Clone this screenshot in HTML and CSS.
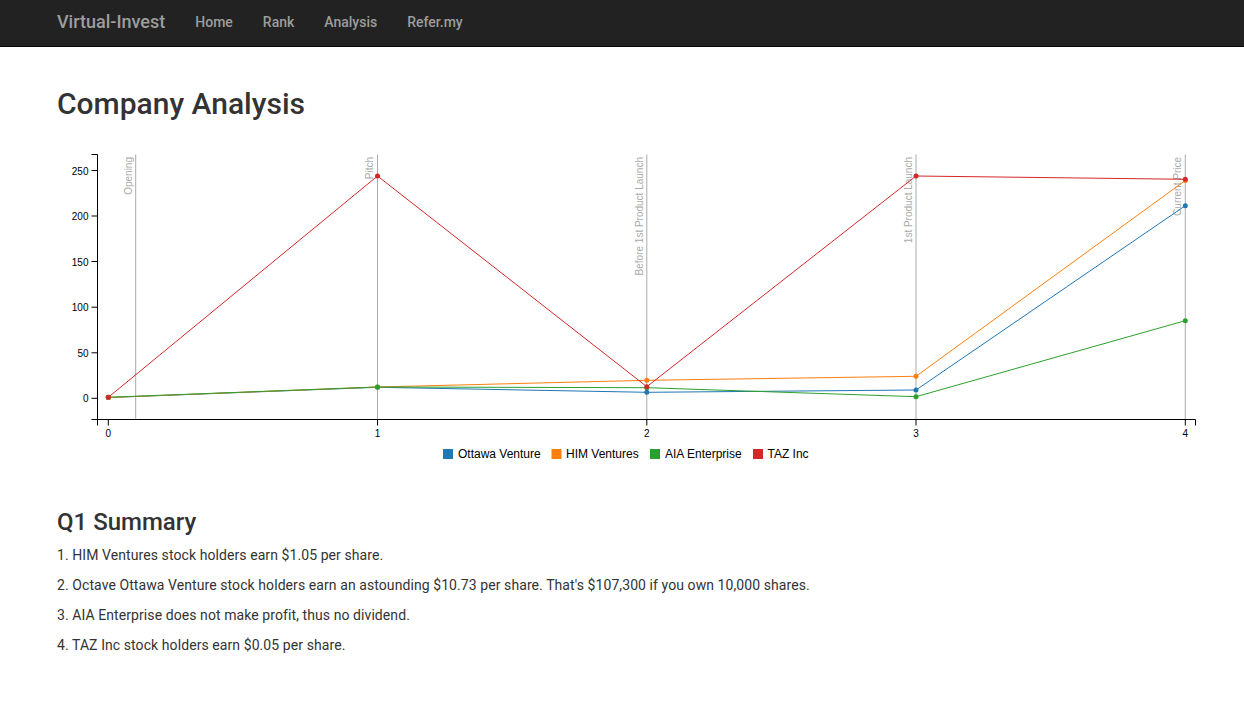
FILE: index.html
```html
<!DOCTYPE html>
<html>
<head>
<meta charset="utf-8">
<title>Company Analysis</title>
<link rel="stylesheet" href="styles.css">
</head>
<body>
<nav class="navbar">
  <div class="nav-inner">
    <a class="brand" href="#">Virtual-Invest</a>
    <a class="nav-link" href="#">Home</a>
    <a class="nav-link" href="#">Rank</a>
    <a class="nav-link" href="#">Analysis</a>
    <a class="nav-link" href="#">Refer.my</a>
  </div>
</nav>
<main class="content">
  <h1 class="title">Company Analysis</h1>
  <svg class="chart" width="1140" height="330" viewBox="57 140 1140 330" xmlns="http://www.w3.org/2000/svg">
    <!-- grid lines -->
    <g class="grid">
      <line x1="135.7" y1="154.5" x2="135.7" y2="419.5"/>
      <line x1="377.5" y1="154.5" x2="377.5" y2="419.5"/>
      <line x1="646.8" y1="154.5" x2="646.8" y2="419.5"/>
      <line x1="916" y1="154.5" x2="916" y2="419.5"/>
      <line x1="1185.3" y1="154.5" x2="1185.3" y2="419.5"/>
    </g>
    <g class="grid-text">
      <text transform="translate(131.5,157) rotate(-90)" text-anchor="end">Opening</text>
      <text transform="translate(373.3,157) rotate(-90)" text-anchor="end">Pitch</text>
      <text transform="translate(642.6,157) rotate(-90)" text-anchor="end">Before 1st Product Launch</text>
      <text transform="translate(911.8,157) rotate(-90)" text-anchor="end">1st Product Launch</text>
      <text transform="translate(1181.1,157) rotate(-90)" text-anchor="end">Current Price</text>
    </g>
    <!-- y axis -->
    <g class="axis">
      <path d="M91.5,154.5 H97.5 V419.5 H91.5"/>
      <line x1="91.5" y1="170.5" x2="97.5" y2="170.5"/>
      <line x1="91.5" y1="216" x2="97.5" y2="216"/>
      <line x1="91.5" y1="261.5" x2="97.5" y2="261.5"/>
      <line x1="91.5" y1="307.2" x2="97.5" y2="307.2"/>
      <line x1="91.5" y1="352.8" x2="97.5" y2="352.8"/>
      <line x1="91.5" y1="398.3" x2="97.5" y2="398.3"/>
    </g>
    <g class="tick-text" text-anchor="end">
      <text x="88.5" y="174.5">250</text>
      <text x="88.5" y="220">200</text>
      <text x="88.5" y="265.5">150</text>
      <text x="88.5" y="311.2">100</text>
      <text x="88.5" y="356.8">50</text>
      <text x="88.5" y="402.3">0</text>
    </g>
    <!-- x axis -->
    <g class="axis">
      <path d="M97.5,425.5 V419.5 H1195.5 V425.5"/>
      <line x1="108.3" y1="419.5" x2="108.3" y2="425.5"/>
      <line x1="377.5" y1="419.5" x2="377.5" y2="425.5"/>
      <line x1="646.8" y1="419.5" x2="646.8" y2="425.5"/>
      <line x1="916" y1="419.5" x2="916" y2="425.5"/>
      <line x1="1185.3" y1="419.5" x2="1185.3" y2="425.5"/>
    </g>
    <g class="tick-text" text-anchor="middle">
      <text x="108.3" y="436.5">0</text>
      <text x="377.5" y="436.5">1</text>
      <text x="646.8" y="436.5">2</text>
      <text x="916" y="436.5">3</text>
      <text x="1185.3" y="436.5">4</text>
    </g>
    <!-- series -->
    <g class="series blue">
      <polyline points="108.3,397.5 377.5,387.3 646.8,392.3 916,390 1185.3,205.7"/>
      <circle cx="108.3" cy="397.5" r="2.5"/><circle cx="377.5" cy="387.3" r="2.5"/><circle cx="646.8" cy="392.3" r="2.5"/><circle cx="916" cy="390" r="2.5"/><circle cx="1185.3" cy="205.7" r="2.5"/>
    </g>
    <g class="series orange">
      <polyline points="108.3,397.5 377.5,387 646.8,380.3 916,376.3 1185.3,180.5"/>
      <circle cx="108.3" cy="397.5" r="2.5"/><circle cx="377.5" cy="387" r="2.5"/><circle cx="646.8" cy="380.3" r="2.5"/><circle cx="916" cy="376.3" r="2.5"/><circle cx="1185.3" cy="180.5" r="2.5"/>
    </g>
    <g class="series green">
      <polyline points="108.3,397.3 377.5,387 646.8,387.7 916,396.7 1185.3,320.7"/>
      <circle cx="108.3" cy="397.3" r="2.5"/><circle cx="377.5" cy="387" r="2.5"/><circle cx="646.8" cy="387.7" r="2.5"/><circle cx="916" cy="396.7" r="2.5"/><circle cx="1185.3" cy="320.7" r="2.5"/>
    </g>
    <g class="series red">
      <polyline points="108.3,397.3 377.5,176 646.8,386.7 916,176 1185.3,179.3"/>
      <circle cx="108.3" cy="397.3" r="2.5"/><circle cx="377.5" cy="176" r="2.5"/><circle cx="646.8" cy="386.7" r="2.5"/><circle cx="916" cy="176" r="2.5"/><circle cx="1185.3" cy="179.3" r="2.5"/>
    </g>
    <!-- legend -->
    <g class="legend">
      <rect x="443" y="449" width="10" height="10" fill="#1f77b4"/>
      <text x="458" y="458">Ottawa Venture</text>
      <rect x="551.5" y="449" width="10" height="10" fill="#ff7f0e"/>
      <text x="566" y="458">HIM Ventures</text>
      <rect x="650" y="449" width="10" height="10" fill="#2ca02c"/>
      <text x="665" y="458">AIA Enterprise</text>
      <rect x="753" y="449" width="10" height="10" fill="#d62728"/>
      <text x="767.5" y="458">TAZ Inc</text>
    </g>
  </svg>
  <h2 class="subtitle">Q1 Summary</h2>
  <p class="line">1. HIM Ventures stock holders earn $1.05 per share.</p>
  <p class="line">2. Octave Ottawa Venture stock holders earn an astounding $10.73 per share. That's $107,300 if you own 10,000 shares.</p>
  <p class="line">3. AIA Enterprise does not make profit, thus no dividend.</p>
  <p class="line">4. TAZ Inc stock holders earn $0.05 per share.</p>
</main>
</body>
</html>
```
FILE: styles.css
```css
html, body {
  margin: 0;
  padding: 0;
  background: #fff;
}
body {
  font-family: Roboto, "Liberation Sans", sans-serif;
  font-size: 14px;
  line-height: 20px;
  color: #333;
}
.navbar {
  height: 44px;
  padding-bottom: 2px;
  background: #222;
  border-bottom: 1px solid #080808;
  display: flex;
  align-items: center;
}
.nav-inner {
  padding-left: 57px;
  display: flex;
  align-items: center;
  gap: 30px;
}
.brand {
  font-size: 18px;
  font-weight: 500;
  color: #9d9d9d;
  text-decoration: none;
}
.nav-link {
  font-size: 14px;
  font-weight: 500;
  color: #9d9d9d;
  text-decoration: none;
}
.content {
  padding: 0 57px;
}
.title {
  font-size: 30px;
  font-weight: 500;
  line-height: 33px;
  margin: 39.6px 0 20.4px;
  color: #333;
}
.chart {
  display: block;
  overflow: visible;
}
.grid line {
  stroke: #aaa;
  stroke-width: 1;
}
.grid-text text {
  fill: #aaa;
  font-family: "Liberation Sans", Arial, sans-serif;
  font-size: 10px;
}
.axis path, .axis line {
  fill: none;
  stroke: #000;
  stroke-width: 1;
}
.tick-text text {
  font-family: "Liberation Sans", Arial, sans-serif;
  font-size: 10px;
  fill: #000;
}
.series polyline {
  fill: none;
  stroke-width: 1;
}
.blue polyline { stroke: #1f77b4; }
.blue circle { fill: #1f77b4; }
.orange polyline { stroke: #ff7f0e; }
.orange circle { fill: #ff7f0e; }
.green polyline { stroke: #2ca02c; }
.green circle { fill: #2ca02c; }
.red polyline { stroke: #d62728; }
.red circle { fill: #d62728; }
.legend text {
  font-family: "Liberation Sans", Arial, sans-serif;
  font-size: 12px;
  fill: #000;
}
.subtitle {
  font-size: 24px;
  font-weight: 500;
  line-height: 26.4px;
  margin: 39px 0 9.3px;
  color: #333;
}
.line {
  margin: 0 0 10px;
  letter-spacing: 0.08px;
}
```
